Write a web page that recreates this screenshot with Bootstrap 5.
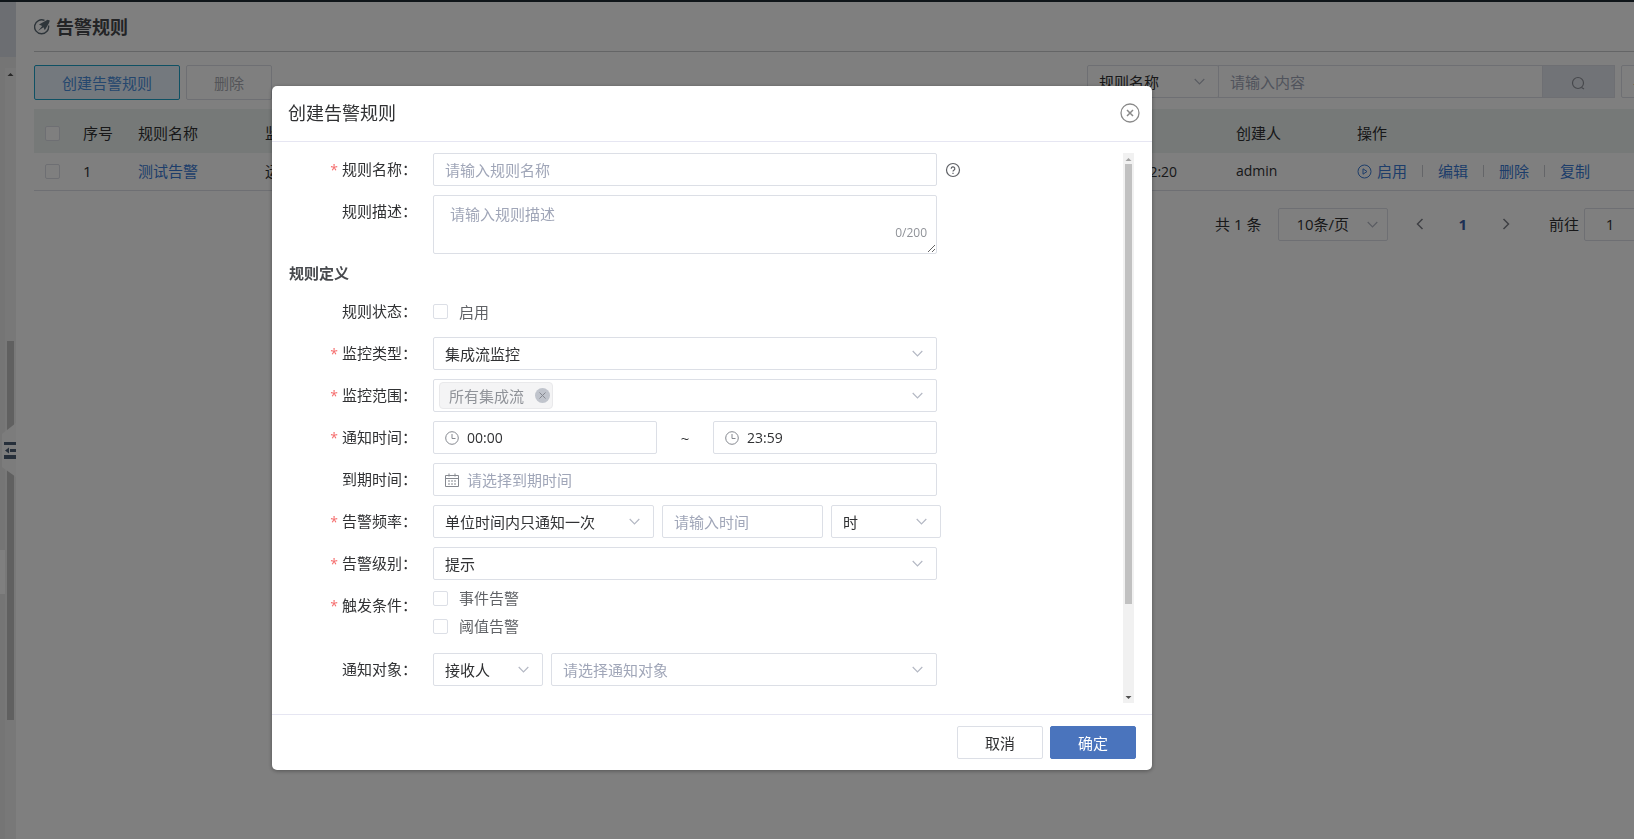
<!DOCTYPE html>
<html lang="zh-CN">
<head>
<meta charset="utf-8">
<meta name="viewport" content="width=device-width, initial-scale=1">
<title>告警规则</title>
<link rel="stylesheet" href="https://cdn.jsdelivr.net/npm/bootstrap@5.3.0/dist/css/bootstrap.min.css">
<style>
  :root { --line: #dcdfe6; --ink: #303133; --hint: #a0a6b8; --link: #3a7bd5; }
  html, body { height: 100%; }
  body { font-family: "Open Sans", "Noto Sans CJK SC", sans-serif; font-size: 15px; line-height: 20px; color: var(--ink); overflow: hidden; background: #fff; }
  button, input, select, textarea { font: inherit; color: inherit; }
  .latin { font-size: 14px; }
  .shell { min-height: 100vh; border-top: 2px solid #1e2a33; }
  .side { position: relative; width: 16px; flex: none; background: #ebebeb; }
  .side-top { height: 55px; background: #d9dce5; }
  .side-track { position: absolute; left: 5px; right: 0; top: 66px; bottom: 0; background: #f1f1f1; }
  .side-up { position: absolute; left: 7px; top: 70px; }
  .side-thumb { position: absolute; left: 7px; width: 7px; top: 339px; height: 379px; background: #c1c1c1; }
  .side-item { position: absolute; left: 0; width: 5px; top: 548px; height: 44px; background: #fff; }
  .side-toggle { position: absolute; left: 2px; top: 420px; border: 0; padding: 0; background: none; line-height: 0; }
  .page { flex: 1 1 0; min-width: 0; overflow: hidden; padding-left: 18px; }
  .page-inner { width: calc(100% + 40px); }
  .page-head { height: 50px; border-bottom: 1px solid #c8cacc; gap: 6px; }
  .page-head h1 { font-size: 18px; line-height: 24px; font-weight: 700; color: #47494d; }
  .toolbar { padding-top: 13px; height: 57px; }
  .tool-btn { height: 35px; padding: 0 27px; border-radius: 2px; background: #fff; border: 1px solid var(--line); color: #a8abb2; }
  .tool-btn.on { background: #e9f2fc; border-color: #1fa3c9; color: #4a8fdc; }
  .find { margin-right: -1px; gap: 6px; }
  .find-box > * { border: 1px solid var(--line); border-radius: 0; height: 33px; }
  .find-box > * + * { margin-left: -1px; }
  .pick { appearance: none; border: 1px solid var(--line); border-radius: 2px; height: 33px; padding: 0 36px 0 11px; background-color: #fff; background-repeat: no-repeat; background-position: right 13px center;
    background-image: url("data:image/svg+xml,%3Csvg xmlns='http://www.w3.org/2000/svg' width='11' height='7' fill='none' stroke='%23b4b8c4' stroke-width='1.2'%3E%3Cpath d='M.7 1l4.8 4.8L10.300 1'/%3E%3C/svg%3E"); }
  .pick.empty { color: var(--hint); }
  .find-kind { width: 132px; }
  .find-text { width: 325px; padding: 0 11px; }
  .find-go { width: 73px; background: #e3e7ee; padding: 3px 0 0; line-height: 0; }
  .more { height: 33px; padding: 0 11px; color: var(--ink); }
  ::placeholder { color: var(--hint) !important; opacity: 1 !important; }
  .grid { table-layout: fixed; width: 100%; margin: 0; border-collapse: collapse; }
  .grid th, .grid td { padding: 0; font-weight: 400; white-space: nowrap; overflow: hidden; }
  .grid thead tr { height: 44px; background: #edf3f1; }
  .grid thead th { padding-top: 4px; color: #303133; }
  .grid tbody tr { height: 37px; border-bottom: 1px solid var(--line); }
  .grid tr > :first-child { padding-left: 11px; }
  .grid a, .acts a { color: var(--link); text-decoration: none; }
  .tick { appearance: none; display: block; width: 15px; height: 15px; margin: 0; border: 1px solid var(--line); border-radius: 2px; background: #fff; flex: none; }
  .acts > * + * { margin-left: 15px; }
  .acts i { width: 1px; height: 12px; background: #c9cbd0; }
  .pager { margin-top: 17px; height: 33px; padding-right: 38px; }
  .pager > span { margin-right: 17px; }
  .pager > label { margin-right: 5px; }
  .pager .pick { width: 110px; padding: 0 0 0 17px; background-position: right 9px center; }
  .pager .bare { border: 0; background: none; padding: 0; line-height: 0; }
  .bare.prev { margin: 0 34px 0 28px; }
  .bare.next { margin: 0 39px 0 35px; }
  .goto { width: 52px; height: 33px; border: 1px solid var(--line); border-radius: 2px; text-align: center; }

  .veil { position: fixed; inset: 0; background: rgba(0,0,0,.5); }
  .dlg-wrap { position: fixed; inset: 0; padding: 86px 0 0 272px; }
  .dlg { width: 880px; max-width: 100%; background: #fff; border-radius: 5px; box-shadow: 0 1px 4px rgba(0,0,0,.35); }
  .dlg-head { height: 56px; padding: 0 12px 2px 16px; border-bottom: 1px solid #e6e6f2; }
  .dlg-head h2 { font-size: 18px; line-height: 24px; font-weight: 400; margin: 0; }
  .dlg-head button { border: 0; background: none; padding: 0; line-height: 0; }
  .dlg-body { padding: 11px 18px 11px 17px; }
  .fields { flex: 1; display: flex; flex-direction: column; gap: 9px; padding-bottom: 17px; }
  .line { display: flex; gap: 8px; }
  .line > .cap { width: 136px; padding-right: 8px; text-align: right; line-height: 33px; flex: none; white-space: nowrap; }
  .line > .cap.req::before { content: "*"; color: #f56c6c; margin-right: 4px; font-size: 14px; }
  .ctl { width: 504px; display: flex; gap: 8px; }
  .box { height: 33px; border: 1px solid var(--line); border-radius: 2px; padding: 0 11px; background: #fff; min-width: 0; }
  .note { position: relative; width: 504px; height: 59px; }
  .note textarea { width: 100%; height: 59px; border: 1px solid var(--line); border-radius: 2px; padding: 8px 16px; display: block; resize: vertical; }
  .note span { position: absolute; right: 10px; bottom: 11px; font-size: 12px; color: #909399; line-height: 20px; }
  .sect { font-size: 15px; font-weight: 700; line-height: 20px; margin: 0 0 3px; color: #47494d; }
  .withicon { display: flex; align-items: center; gap: 8px; }
  .withicon input { border: 0; padding: 0; outline: 0; min-width: 0; flex: 1; background: none; }
  .chips { padding: 0 13px 0 5px; }
  .chip { height: 27px; border: 1px solid #e9e9eb; border-radius: 4px; background: #f4f4f5; color: #909399; padding: 0 2px 0 9px; gap: 11px; }
  .chip button { border: 0; padding: 0; background: none; line-height: 0; }
  .checks { display: flex; flex-direction: column; justify-content: center; color: #606266; }
  .checks label { display: flex; align-items: center; gap: 11px; height: 28px; }
  .checks.many { margin: -5px 0 4px; }
  .bar { width: 11px; flex: none; background: #f1f1f1; display: flex; flex-direction: column; align-items: center; }
  .bar i { width: 7px; background: #c1c1c1; flex: 0 0 80%; }
  .dlg-foot { border-top: 1px solid #e6e6f2; padding: 11px 16px; gap: 7px; }
  .dlg-foot button { height: 33px; width: 86px; border-radius: 2px; border: 1px solid var(--line); background: #fff; padding: 0; }
  .dlg-foot .go { background: #4a74bd; border-color: #4a74bd; color: #fff; }
  .w-start, .w-end { width: 224px; }
  .w-rate { width: 221px; }
  .w-num { width: 161px; }
  .w-unit { width: 110px; }
</style>
</head>
<body>
<div class="shell d-flex">
  <aside class="side">
    <div class="side-top"></div>
    <div class="side-track"></div>
    <svg class="side-up" width="7" height="5"><path d="M3.500 1L6.500 4H.5z" fill="#505050"/></svg>
    <div class="side-thumb"></div>
    <div class="side-item"></div>
    <button class="side-toggle" type="button" aria-label="收起菜单">
      <svg width="14" height="56"><path d="M14 1L0 12v33l14 10z" fill="#f9f9f9"/><g fill="#4d5f75"><path d="M2 20h12v3H2zM8 27h6v3H8zM2 33h12v4H2zM3 28.500l4-3v6z"/></g></svg>
    </button>
  </aside>
  <main class="page">
    <div class="page-inner">
      <header class="page-head d-flex align-items-center">
        <svg width="16" height="16" viewBox="0 0 16 16" fill="none" stroke="#5c6a75" stroke-width="1.400"><path d="M10.500 1.400A7 7 0 1 0 14.500 6.500"/><path d="M15.800 1.600L13.500.8 5 5.600l3.200 1.500L4 12l5.500-3.700 1.300 2.900L15 4z" fill="#5c6a75" stroke="none"/></svg>
        <h1 class="m-0">告警规则</h1>
      </header>
      <div class="toolbar d-flex justify-content-between align-items-start">
        <div class="d-flex" style="gap:6px">
          <button class="tool-btn on" type="button">创建告警规则</button>
          <button class="tool-btn" type="button">删除</button>
        </div>
        <div class="find d-flex">
          <div class="find-box d-flex">
            <select class="pick find-kind" aria-label="查询字段"><option>规则名称</option></select>
            <input class="find-text" type="text" placeholder="请输入内容" aria-label="查询内容">
            <button class="find-go" type="button" aria-label="查询"><svg width="15" height="15" fill="none" stroke="#8d9099" stroke-width="1.200"><circle cx="7" cy="7" r="5.500"/><path d="M10.500 11.500l2.500 1.500"/></svg></button>
          </div>
          <button class="tool-btn more" type="button">导出</button>
        </div>
      </div>
      <table class="grid">
        <colgroup><col style="width:49px"><col style="width:55px"><col style="width:127px"><col style="width:780px"><col style="width:191px"><col style="width:121px"><col></colgroup>
        <thead><tr><th><input class="tick" type="checkbox" aria-label="全选"></th><th>序号</th><th>规则名称</th><th>监控</th><th></th><th>创建人</th><th>操作</th></tr></thead>
        <tbody><tr><td><input class="tick" type="checkbox" aria-label="选择"></td><td>1</td><td><a href="#">测试告警</a></td><td>运行</td><td><span class="latin">2023-04-12 17:22:20</span></td><td class="latin">admin</td>
          <td><div class="acts d-flex align-items-center"><a href="#" class="d-flex align-items-center" style="gap:5px"><svg width="15" height="15" fill="none" stroke="#3a7bd5"><circle cx="7.500" cy="7.500" r="6.500"/><path d="M6 4.800v5.400l4-2.700z"/></svg>启用</a><i></i><a href="#">编辑</a><i></i><a href="#">删除</a><i></i><a href="#">复制</a></div></td></tr></tbody>
      </table>
      <div class="pager d-flex align-items-center justify-content-end">
        <span>共 1 条</span>
        <select class="pick" aria-label="每页条数"><option>10条/页</option></select>
        <button class="bare prev" type="button" aria-label="上一页"><svg width="8" height="12" fill="none" stroke="#7d8088" stroke-width="1.500"><path d="M6.500 1l-5 5 5 5"/></svg></button>
        <a href="#" class="text-decoration-none fw-bold" style="color:#3a5fa8">1</a>
        <button class="bare next" type="button" aria-label="下一页"><svg width="8" height="12" fill="none" stroke="#7d8088" stroke-width="1.500"><path d="M1.500 1l5 5-5 5"/></svg></button>
        <label for="goto">前往</label>
        <input id="goto" class="goto" type="text" value="1">
      </div>
    </div>
  </main>
</div>

<div class="veil"></div>
<div class="dlg-wrap">
  <section class="dlg" role="dialog" aria-labelledby="dlgTitle">
    <header class="dlg-head d-flex align-items-center justify-content-between">
      <h2 id="dlgTitle">创建告警规则</h2>
      <button type="button" aria-label="关闭"><svg width="20" height="20" fill="none" stroke="#8a8a8a" stroke-width="1.300"><circle cx="10" cy="10" r="9"/><path d="M7 7l6 6M13 7l-6 6" stroke-width="1.500"/></svg></button>
    </header>
    <div class="dlg-body d-flex">
      <form class="fields">
        <div class="line"><label class="cap req" for="f1">规则名称：</label><div class="ctl"><input id="f1" class="box w-100" type="text" placeholder="请输入规则名称"></div>
          <svg class="align-self-center" width="16" height="16" fill="none" stroke="#5f6166" stroke-width="1.200"><circle cx="8" cy="8" r="6.500"/><path d="M6.200 6.700a1.800 1.800 0 1 1 2.700 1.500c-.6.400-.9.600-.9 1.300M8 10.700v1.200"/></svg></div>
        <div class="line"><label class="cap" for="f2">规则描述：</label><div class="note"><textarea id="f2" placeholder="请输入规则描述"></textarea><span>0/200</span></div></div>
        <h3 class="sect">规则定义</h3>
        <div class="line"><span class="cap">规则状态：</span><div class="checks"><label><input class="tick" type="checkbox">启用</label></div></div>
        <div class="line"><label class="cap req" for="f3">监控类型：</label><div class="ctl"><select id="f3" class="pick w-100"><option>集成流监控</option></select></div></div>
        <div class="line"><label class="cap req" for="f4">监控范围：</label><div class="ctl"><div class="box chips w-100 d-flex align-items-center justify-content-between"><span class="chip d-flex align-items-center">所有集成流<button id="f4" type="button" aria-label="移除"><svg width="15" height="15"><circle cx="7.500" cy="7.500" r="7.500" fill="#c0c4cc"/><path d="M4.500 4.500l6 6M10.500 4.500l-6 6" stroke="#85888f" fill="none"/></svg></button></span><svg width="11" height="7" fill="none" stroke="#b4b8c4" stroke-width="1.200"><path d="M.7 1l4.800 4.800L10.300 1"/></svg></div></div></div>
        <div class="line"><label class="cap req" for="f5">通知时间：</label><div class="ctl justify-content-between align-items-center">
          <div class="box withicon latin w-start"><svg width="14" height="14" fill="none" stroke="#85888f"><circle cx="7" cy="7" r="6.300"/><path d="M7 3v4.500h3.500"/></svg><input id="f5" type="text" value="00:00"></div>
          <span>~</span>
          <div class="box withicon latin w-end"><svg width="14" height="14" fill="none" stroke="#85888f"><circle cx="7" cy="7" r="6.300"/><path d="M7 3v4.500h3.500"/></svg><input type="text" value="23:59" aria-label="结束时间"></div></div></div>
        <div class="line"><label class="cap" for="f6">到期时间：</label><div class="ctl"><div class="box withicon w-100"><svg width="14" height="14" fill="none" stroke="#85888f"><path d="M.5 2.500h13v11H.5zM.5 5.500h13M4 .5v3M10 .5v3M3 8h2M6 8h2M9 8h2M3 11h2M6 11h2M9 11h2"/></svg><input id="f6" type="text" placeholder="请选择到期时间"></div></div></div>
        <div class="line"><label class="cap req" for="f7">告警频率：</label><select id="f7" class="pick w-rate"><option>单位时间内只通知一次</option></select><input class="box w-num" type="text" placeholder="请输入时间" aria-label="时间"><select class="pick w-unit" aria-label="单位"><option>时</option></select></div>
        <div class="line"><label class="cap req" for="f8">告警级别：</label><div class="ctl"><select id="f8" class="pick w-100"><option>提示</option></select></div></div>
        <div class="line"><span class="cap req">触发条件：</span><div class="checks many"><label><input class="tick" type="checkbox">事件告警</label><label><input class="tick" type="checkbox">阈值告警</label></div></div>
        <div class="line"><label class="cap" for="f9">通知对象：</label><div class="ctl"><select id="f9" class="pick w-unit"><option>接收人</option></select><select class="pick empty flex-fill" aria-label="通知对象"><option>请选择通知对象</option></select></div></div>
      </form>
      <div class="bar" aria-hidden="true">
        <svg width="7" height="11"><path d="M3.500 5L6.500 8H.5z" fill="#a3a3a3"/></svg><i></i>
        <svg class="mt-auto" width="7" height="11"><path d="M3.500 7L.5 4h6z" fill="#505050"/></svg>
      </div>
    </div>
    <footer class="dlg-foot d-flex justify-content-end">
      <button type="button">取消</button><button class="go" type="button">确定</button>
    </footer>
  </section>
</div>
<script src="https://cdn.jsdelivr.net/npm/bootstrap@5.3.0/dist/js/bootstrap.bundle.min.js"></script>
</body>
</html>
